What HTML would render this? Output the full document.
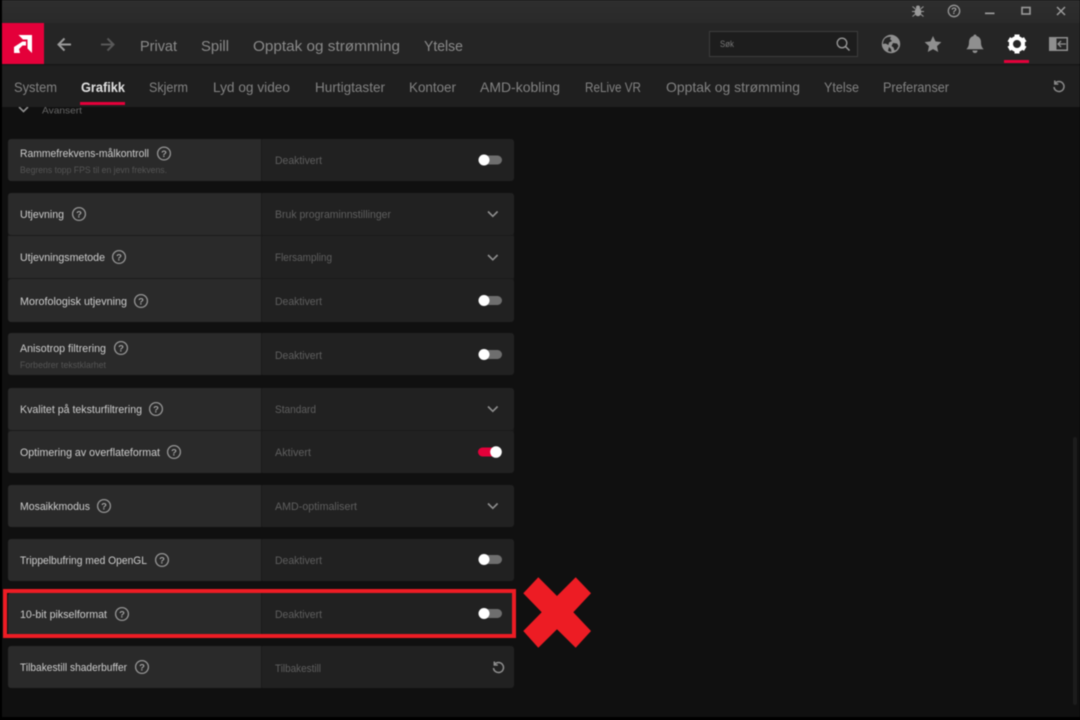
<!DOCTYPE html>
<html lang="no"><head><meta charset="utf-8"><title>Radeon Innstillinger</title>
<style>
html,body{margin:0;padding:0;background:#000;width:1080px;height:720px;overflow:hidden}
svg{display:block;filter:blur(.4px)}
text{font-family:"Liberation Sans",sans-serif}
.n{font-size:15px;fill:#8a8a8a}
.s{font-size:14px;fill:#828282}
.l{font-size:11px;fill:#cdcdcd}
.v{font-size:10.800px;fill:#5f5f5f}
.d{font-size:9px;fill:#555}
.q{font-size:9.500px;fill:#a0a0a0;font-weight:bold;text-anchor:middle}
.hc{fill:none;stroke:#969696;stroke-width:1.300}
.ch{fill:none;stroke:#8f8f8f;stroke-width:1.600}
.lc{fill:#2a2a2a}.rc{fill:#212121}
</style></head><body>
<svg width="1080" height="720" viewBox="0 0 1080 720" xmlns="http://www.w3.org/2000/svg">
<defs>
<linearGradient id="tb" x1="0" y1="0" x2="0" y2="1"><stop offset="0" stop-color="#2e2e2e"/><stop offset="1" stop-color="#2a2a2a"/></linearGradient>
<clipPath id="lg"><rect x="8" y="0" width="253" height="720"/></clipPath>
<clipPath id="rg"><rect x="262" y="0" width="252" height="720"/></clipPath>
</defs>
<rect width="1080" height="720" fill="#000"/>
<rect x="2" y="0" width="1078" height="717" fill="#101010"/>

<!-- Avansert, clipped behind sub nav -->
<path class="ch" d="M19 107l4.500 4.500 4.500-4.500"/>
<text x="42" y="113.500" font-size="9.500" fill="#666" textLength="40" lengthAdjust="spacingAndGlyphs">Avansert</text>

<!-- header bars -->
<rect x="2" y="0" width="1078" height="23" fill="url(#tb)"/>
<rect x="2" y="23" width="1078" height="41" fill="#252525"/>
<rect x="2" y="64" width="1078" height="43" fill="#1f1f1f"/>
<rect x="2" y="64" width="1078" height="1.500" fill="#171717"/>

<!-- logo -->
<rect x="2" y="23" width="42" height="41" fill="#e4003a"/>
<path fill="#fff" d="M18.500 35H32V53L27.500 48.500V39.500H23Z"/>
<path fill="#fff" d="M22.500 41.500H26V45.500H22.500L19 49 20 53H14V47Z"/>

<!-- arrows -->
<path fill="none" stroke="#9a9a9a" stroke-width="2" d="M71 44.500H59M64.500 38.500L58.500 44.500 64.500 50.500"/>
<path fill="none" stroke="#585858" stroke-width="2" d="M101 44.500H113M107.500 38.500L113.500 44.500 107.500 50.500"/>

<!-- main nav -->
<text class="n" x="140" y="51" textLength="37" lengthAdjust="spacingAndGlyphs">Privat</text>
<text class="n" x="201" y="51" textLength="28" lengthAdjust="spacingAndGlyphs">Spill</text>
<text class="n" x="253" y="51" textLength="147" lengthAdjust="spacingAndGlyphs">Opptak og strømming</text>
<text class="n" x="424" y="51" textLength="39" lengthAdjust="spacingAndGlyphs">Ytelse</text>

<!-- search -->
<rect x="709.500" y="31.500" width="148" height="25" fill="#1d1d1d" stroke="#3d3d3d"/>
<text x="720" y="47" font-size="9" fill="#777" textLength="14" lengthAdjust="spacingAndGlyphs">Søk</text>
<circle cx="842" cy="43" r="4.800" fill="none" stroke="#9a9a9a" stroke-width="1.300"/>
<path d="M845.500 46.500L849.500 50.500" stroke="#9a9a9a" stroke-width="1.500"/>

<!-- globe -->
<circle cx="891" cy="44" r="9.200" fill="#8f8f8f"/>
<path fill="#252525" d="M885 38.500c2-1.500 4-2 6-1.500l-1 2 2 2-3 1.500-.5 2.500-3-1.500-2.500.5c0-2 .7-4 2-5.500zM893 43l4 .5 1.500 2.500-2 3.500-2 1-1-3-2-1.500zM889 47l2 2 .5 2.800c-1.500 0-2.500-.3-3.500-1z"/>

<!-- star -->
<path fill="#8f8f8f" d="M933 36l2.500 5.400 5.900.7-4.400 4 1.200 5.900-5.200-2.900-5.200 2.900 1.200-5.900-4.400-4 5.900-.7z"/>

<!-- bell -->
<path fill="#8f8f8f" d="M975 34.500c.9 0 1.500.6 1.500 1.500 3 .8 4.500 3.200 4.500 6.200 0 3.500 1 5.300 2.700 7H966.300c1.700-1.700 2.700-3.500 2.700-7 0-3 1.500-5.400 4.500-6.200 0-.9.600-1.500 1.500-1.500zM972.500 50.500h5c0 1.500-1 2.500-2.500 2.500s-2.500-1-2.500-2.500z"/>

<!-- gear -->
<circle cx="1017" cy="44" r="6" fill="none" stroke="#fff" stroke-width="4"/>
<g fill="#fff"><rect x="1014.500" y="34.500" width="5" height="4"/><rect x="1014.500" y="49.500" width="5" height="4"/>
<rect x="1014.500" y="34.500" width="5" height="4" transform="rotate(60 1017 44)"/><rect x="1014.500" y="34.500" width="5" height="4" transform="rotate(120 1017 44)"/>
<rect x="1014.500" y="34.500" width="5" height="4" transform="rotate(240 1017 44)"/><rect x="1014.500" y="34.500" width="5" height="4" transform="rotate(300 1017 44)"/></g>
<rect x="1004" y="60" width="25" height="3" fill="#e4003a"/>

<!-- panel icon -->
<rect x="1049" y="37" width="19" height="14" fill="#8f8f8f"/>
<rect x="1056.500" y="38.500" width="10" height="11" fill="#252525"/>
<path d="M1066 44h-8M1061 41l-3 3 3 3" fill="none" stroke="#8f8f8f" stroke-width="1.300"/>

<!-- window controls -->
<g fill="#9a9a9a">
<ellipse cx="918" cy="12" rx="3.300" ry="4.300"/><circle cx="918" cy="7.500" r="2"/>
<path d="M912.500 6.500l3 2.500M923.500 6.500l-3 2.500M912 11.500h3M924 11.500h-3M912.500 16.500l3-2.500M923.500 16.500l-3-2.500" stroke="#9a9a9a" stroke-width="1"/>
</g>
<circle cx="954" cy="11" r="5.700" class="hc"/>
<text class="q" x="954" y="14.200">?</text>
<rect x="985" y="12.500" width="9.500" height="1.700" fill="#9a9a9a"/>
<rect x="1022" y="7.500" width="8" height="6.500" fill="none" stroke="#9a9a9a" stroke-width="1.600"/>
<path d="M1057 7l8 8M1065 7l-8 8" stroke="#9a9a9a" stroke-width="1.500"/>

<!-- sub nav -->
<text class="s" x="14" y="92" textLength="43" lengthAdjust="spacingAndGlyphs">System</text>
<text class="s" x="81" y="92" textLength="44" lengthAdjust="spacingAndGlyphs" font-weight="bold" style="fill:#e0e0e0">Grafikk</text>
<text class="s" x="149" y="92" textLength="39" lengthAdjust="spacingAndGlyphs">Skjerm</text>
<text class="s" x="213" y="92" textLength="77" lengthAdjust="spacingAndGlyphs">Lyd og video</text>
<text class="s" x="315" y="92" textLength="70" lengthAdjust="spacingAndGlyphs">Hurtigtaster</text>
<text class="s" x="409" y="92" textLength="47" lengthAdjust="spacingAndGlyphs">Kontoer</text>
<text class="s" x="480" y="92" textLength="80" lengthAdjust="spacingAndGlyphs">AMD-kobling</text>
<text class="s" x="585" y="92" textLength="56" lengthAdjust="spacingAndGlyphs">ReLive VR</text>
<text class="s" x="666" y="92" textLength="134" lengthAdjust="spacingAndGlyphs">Opptak og strømming</text>
<text class="s" x="824" y="92" textLength="35" lengthAdjust="spacingAndGlyphs">Ytelse</text>
<text class="s" x="883" y="92" textLength="66" lengthAdjust="spacingAndGlyphs">Preferanser</text>
<rect x="80" y="102" width="45" height="3" fill="#e4003a"/>
<path fill="none" stroke="#8a8a8a" stroke-width="1.500" d="M1055 83.500a5 5 0 1 1-1 3.500M1054.800 80.500v3.500h3.500"/>

<!-- group backing (row separators) -->
<g fill="#1a1a1a">
<rect x="8" y="139" width="506" height="42" rx="3"/>
<rect x="8" y="193" width="506" height="129" rx="3"/>
<rect x="8" y="333" width="506" height="42" rx="3"/>
<rect x="8" y="388" width="506" height="85" rx="3"/>
<rect x="8" y="485" width="506" height="42" rx="3"/>
<rect x="8" y="539" width="506" height="42" rx="3"/>
<rect x="8" y="593" width="506" height="42" rx="3"/>
<rect x="8" y="646" width="506" height="42" rx="3"/>
</g>

<!-- row backgrounds -->
<g clip-path="url(#lg)" class="lc">
<rect x="8" y="139" width="260" height="42" rx="3"/>
<rect x="8" y="193" width="260" height="42" rx="3"/><rect x="8" y="236" width="260" height="42"/><rect x="8" y="279" width="260" height="43" rx="3"/>
<rect x="8" y="333" width="260" height="42" rx="3"/>
<rect x="8" y="388" width="260" height="42" rx="3"/><rect x="8" y="431" width="260" height="42" rx="3"/>
<rect x="8" y="485" width="260" height="42" rx="3"/>
<rect x="8" y="539" width="260" height="42" rx="3"/>
<rect x="8" y="593" width="260" height="42" rx="3"/>
<rect x="8" y="646" width="260" height="42" rx="3"/>
</g>
<g clip-path="url(#rg)" class="rc">
<rect x="250" y="139" width="264" height="42" rx="3"/>
<rect x="250" y="193" width="264" height="42" rx="3"/><rect x="250" y="236" width="264" height="42"/><rect x="250" y="279" width="264" height="43" rx="3"/>
<rect x="250" y="333" width="264" height="42" rx="3"/>
<rect x="250" y="388" width="264" height="42" rx="3"/><rect x="250" y="431" width="264" height="42" rx="3"/>
<rect x="250" y="485" width="264" height="42" rx="3"/>
<rect x="250" y="539" width="264" height="42" rx="3"/>
<rect x="250" y="593" width="264" height="42" rx="3"/>
<rect x="250" y="646" width="264" height="42" rx="3"/>
</g>

<!-- labels -->
<text class="l" x="20" y="157" textLength="129" lengthAdjust="spacingAndGlyphs">Rammefrekvens-målkontroll</text>
<text class="d" x="20" y="173" textLength="147" lengthAdjust="spacingAndGlyphs">Begrens topp FPS til en jevn frekvens.</text>
<text class="l" x="20" y="218" textLength="44" lengthAdjust="spacingAndGlyphs">Utjevning</text>
<text class="l" x="20" y="261" textLength="85" lengthAdjust="spacingAndGlyphs">Utjevningsmetode</text>
<text class="l" x="20" y="305" textLength="107" lengthAdjust="spacingAndGlyphs">Morofologisk utjevning</text>
<text class="l" x="20" y="352" textLength="86" lengthAdjust="spacingAndGlyphs">Anisotrop filtrering</text>
<text class="d" x="20" y="368" textLength="86" lengthAdjust="spacingAndGlyphs">Forbedrer tekstklarhet</text>
<text class="l" x="20" y="413" textLength="122" lengthAdjust="spacingAndGlyphs">Kvalitet på teksturfiltrering</text>
<text class="l" x="20" y="456" textLength="140" lengthAdjust="spacingAndGlyphs">Optimering av overflateformat</text>
<text class="l" x="20" y="510" textLength="70" lengthAdjust="spacingAndGlyphs">Mosaikkmodus</text>
<text class="l" x="20" y="564" textLength="127" lengthAdjust="spacingAndGlyphs">Trippelbufring med OpenGL</text>
<text class="l" x="20" y="618" textLength="87" lengthAdjust="spacingAndGlyphs">10-bit pikselformat</text>
<text class="l" x="20" y="671" textLength="107" lengthAdjust="spacingAndGlyphs">Tilbakestill shaderbuffer</text>

<!-- help icons -->
<circle class="hc" cx="164" cy="153.500" r="6.400"/><text class="q" x="164" y="156.900">?</text>
<circle class="hc" cx="79" cy="214" r="6.400"/><text class="q" x="79" y="217.400">?</text>
<circle class="hc" cx="119" cy="257" r="6.400"/><text class="q" x="119" y="260.400">?</text>
<circle class="hc" cx="141" cy="301" r="6.400"/><text class="q" x="141" y="304.400">?</text>
<circle class="hc" cx="121" cy="348" r="6.400"/><text class="q" x="121" y="351.400">?</text>
<circle class="hc" cx="156" cy="409" r="6.400"/><text class="q" x="156" y="412.400">?</text>
<circle class="hc" cx="174" cy="452" r="6.400"/><text class="q" x="174" y="455.400">?</text>
<circle class="hc" cx="104" cy="506" r="6.400"/><text class="q" x="104" y="509.400">?</text>
<circle class="hc" cx="162" cy="560" r="6.400"/><text class="q" x="162" y="563.400">?</text>
<circle class="hc" cx="122" cy="614" r="6.400"/><text class="q" x="122" y="617.400">?</text>
<circle class="hc" cx="142" cy="667" r="6.400"/><text class="q" x="142" y="670.400">?</text>

<!-- values -->
<text class="v" x="275" y="164" textLength="47" lengthAdjust="spacingAndGlyphs">Deaktivert</text>
<text class="v" x="275" y="218" textLength="116" lengthAdjust="spacingAndGlyphs">Bruk programinnstillinger</text>
<text class="v" x="275" y="261" textLength="57" lengthAdjust="spacingAndGlyphs">Flersampling</text>
<text class="v" x="275" y="305" textLength="47" lengthAdjust="spacingAndGlyphs">Deaktivert</text>
<text class="v" x="275" y="359" textLength="47" lengthAdjust="spacingAndGlyphs">Deaktivert</text>
<text class="v" x="275" y="413" textLength="41" lengthAdjust="spacingAndGlyphs">Standard</text>
<text class="v" x="275" y="456" textLength="36" lengthAdjust="spacingAndGlyphs">Aktivert</text>
<text class="v" x="275" y="510" textLength="82" lengthAdjust="spacingAndGlyphs">AMD-optimalisert</text>
<text class="v" x="275" y="564" textLength="47" lengthAdjust="spacingAndGlyphs">Deaktivert</text>
<text class="v" x="275" y="618" textLength="47" lengthAdjust="spacingAndGlyphs">Deaktivert</text>
<text class="v" x="275" y="672" textLength="46" lengthAdjust="spacingAndGlyphs">Tilbakestill</text>

<!-- chevrons -->
<path class="ch" d="M488 211.500l4.800 4.800 4.800-4.800"/>
<path class="ch" d="M488 255l4.800 4.800 4.800-4.800"/>
<path class="ch" d="M488 406.500l4.800 4.800 4.800-4.800"/>
<path class="ch" d="M488 503.500l4.800 4.800 4.800-4.800"/>

<!-- toggles -->
<rect x="479" y="155.500" width="23" height="9" rx="4.500" fill="#6e6e6e"/><circle cx="484" cy="160" r="5.500" fill="#fff"/>
<rect x="479" y="296" width="23" height="9" rx="4.500" fill="#6e6e6e"/><circle cx="484" cy="300.500" r="5.500" fill="#fff"/>
<rect x="479" y="350" width="23" height="9" rx="4.500" fill="#6e6e6e"/><circle cx="484" cy="354.500" r="5.500" fill="#fff"/>
<rect x="478" y="447.500" width="23" height="9" rx="4.500" fill="#e4003a"/><circle cx="496" cy="452" r="5.800" fill="#fff"/>
<rect x="479" y="555" width="23" height="9" rx="4.500" fill="#6e6e6e"/><circle cx="484" cy="559.500" r="5.500" fill="#fff"/>
<rect x="479" y="609" width="23" height="9" rx="4.500" fill="#6e6e6e"/><circle cx="484" cy="613.500" r="5.500" fill="#fff"/>

<!-- reset row icon -->
<path fill="none" stroke="#8f8f8f" stroke-width="1.500" d="M494.500 664.500a5 5 0 1 1-1 3.500M494.300 661.500v3.500h3.500"/>

<!-- scrollbar -->
<rect x="1073" y="437" width="4" height="268" rx="2" fill="#1c1c1c"/>

<!-- red annotation -->
<rect x="5" y="591" width="509" height="45" fill="none" stroke="#ed1c24" stroke-width="4"/>
<path fill="#ed1c24" d="M538.300 577.300L557 596 575.700 577.300 591 593.300 573.300 612.300 591 631 575.700 647.700 557 629.300 538.300 647.700 523.300 631 541.700 612.300 523.300 593.300Z"/>
</svg>
</body></html>
